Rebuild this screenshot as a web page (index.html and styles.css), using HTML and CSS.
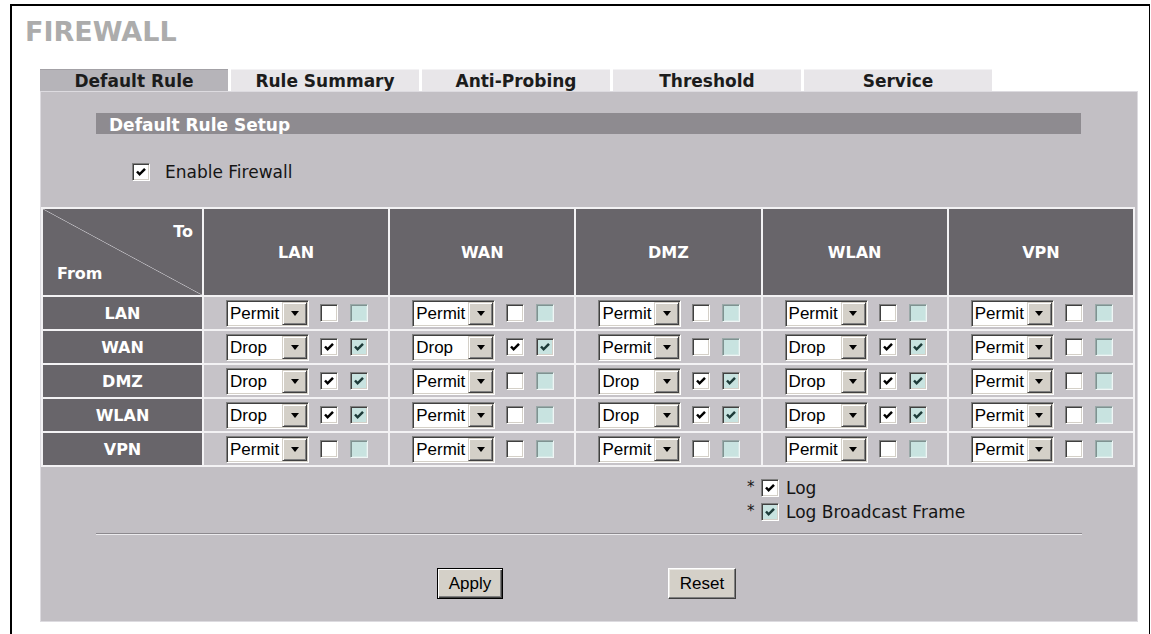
FILE: index.html
```html
<!DOCTYPE html>
<html lang="en">
<head>
<meta charset="utf-8">
<title>Firewall - Default Rule</title>
<link rel="stylesheet" href="styles.css">
</head>
<body>
<div class="frame">
  <h1 class="title">FIREWALL</h1>

  <div class="tabs">
    <div class="tab active">Default Rule</div>
    <div class="tab">Rule Summary</div>
    <div class="tab">Anti-Probing</div>
    <div class="tab">Threshold</div>
    <div class="tab">Service</div>
  </div>

  <div class="panel">
    <div class="section-bar">Default Rule Setup</div>

    <div class="enable">
      <span class="cb on"><svg viewBox="0 0 14 14"><path d="M3 6.5l2.6 2.8L11 3.8"/></svg></span>
      <span>Enable Firewall</span>
    </div>

    <table class="rules">
      <tr class="head">
        <th class="corner"><span class="to">To</span><span class="from">From</span></th>
        <th>LAN</th><th>WAN</th><th>DMZ</th><th>WLAN</th><th>VPN</th>
      </tr>
      <tr>
        <th>LAN</th>
        <td><div class="cell"><div class="select"><span class="value">Permit</span><span class="drop"><i></i></span></div><span class="cb"></span><span class="cb teal"></span></div></td>
        <td><div class="cell"><div class="select"><span class="value">Permit</span><span class="drop"><i></i></span></div><span class="cb"></span><span class="cb teal"></span></div></td>
        <td><div class="cell"><div class="select"><span class="value">Permit</span><span class="drop"><i></i></span></div><span class="cb"></span><span class="cb teal"></span></div></td>
        <td><div class="cell"><div class="select"><span class="value">Permit</span><span class="drop"><i></i></span></div><span class="cb"></span><span class="cb teal"></span></div></td>
        <td><div class="cell"><div class="select"><span class="value">Permit</span><span class="drop"><i></i></span></div><span class="cb"></span><span class="cb teal"></span></div></td>
      </tr>
      <tr>
        <th>WAN</th>
        <td><div class="cell"><div class="select"><span class="value">Drop</span><span class="drop"><i></i></span></div><span class="cb on"><svg viewBox="0 0 14 14"><path d="M3 6.5l2.6 2.8L11 3.8"/></svg></span><span class="cb teal on"><svg viewBox="0 0 14 14"><path d="M3 6.5l2.6 2.8L11 3.8"/></svg></span></div></td>
        <td><div class="cell"><div class="select"><span class="value">Drop</span><span class="drop"><i></i></span></div><span class="cb on"><svg viewBox="0 0 14 14"><path d="M3 6.5l2.6 2.8L11 3.8"/></svg></span><span class="cb teal on"><svg viewBox="0 0 14 14"><path d="M3 6.5l2.6 2.8L11 3.8"/></svg></span></div></td>
        <td><div class="cell"><div class="select"><span class="value">Permit</span><span class="drop"><i></i></span></div><span class="cb"></span><span class="cb teal"></span></div></td>
        <td><div class="cell"><div class="select"><span class="value">Drop</span><span class="drop"><i></i></span></div><span class="cb on"><svg viewBox="0 0 14 14"><path d="M3 6.5l2.6 2.8L11 3.8"/></svg></span><span class="cb teal on"><svg viewBox="0 0 14 14"><path d="M3 6.5l2.6 2.8L11 3.8"/></svg></span></div></td>
        <td><div class="cell"><div class="select"><span class="value">Permit</span><span class="drop"><i></i></span></div><span class="cb"></span><span class="cb teal"></span></div></td>
      </tr>
      <tr>
        <th>DMZ</th>
        <td><div class="cell"><div class="select"><span class="value">Drop</span><span class="drop"><i></i></span></div><span class="cb on"><svg viewBox="0 0 14 14"><path d="M3 6.5l2.6 2.8L11 3.8"/></svg></span><span class="cb teal on"><svg viewBox="0 0 14 14"><path d="M3 6.5l2.6 2.8L11 3.8"/></svg></span></div></td>
        <td><div class="cell"><div class="select"><span class="value">Permit</span><span class="drop"><i></i></span></div><span class="cb"></span><span class="cb teal"></span></div></td>
        <td><div class="cell"><div class="select"><span class="value">Drop</span><span class="drop"><i></i></span></div><span class="cb on"><svg viewBox="0 0 14 14"><path d="M3 6.5l2.6 2.8L11 3.8"/></svg></span><span class="cb teal on"><svg viewBox="0 0 14 14"><path d="M3 6.5l2.6 2.8L11 3.8"/></svg></span></div></td>
        <td><div class="cell"><div class="select"><span class="value">Drop</span><span class="drop"><i></i></span></div><span class="cb on"><svg viewBox="0 0 14 14"><path d="M3 6.5l2.6 2.8L11 3.8"/></svg></span><span class="cb teal on"><svg viewBox="0 0 14 14"><path d="M3 6.5l2.6 2.8L11 3.8"/></svg></span></div></td>
        <td><div class="cell"><div class="select"><span class="value">Permit</span><span class="drop"><i></i></span></div><span class="cb"></span><span class="cb teal"></span></div></td>
      </tr>
      <tr>
        <th>WLAN</th>
        <td><div class="cell"><div class="select"><span class="value">Drop</span><span class="drop"><i></i></span></div><span class="cb on"><svg viewBox="0 0 14 14"><path d="M3 6.5l2.6 2.8L11 3.8"/></svg></span><span class="cb teal on"><svg viewBox="0 0 14 14"><path d="M3 6.5l2.6 2.8L11 3.8"/></svg></span></div></td>
        <td><div class="cell"><div class="select"><span class="value">Permit</span><span class="drop"><i></i></span></div><span class="cb"></span><span class="cb teal"></span></div></td>
        <td><div class="cell"><div class="select"><span class="value">Drop</span><span class="drop"><i></i></span></div><span class="cb on"><svg viewBox="0 0 14 14"><path d="M3 6.5l2.6 2.8L11 3.8"/></svg></span><span class="cb teal on"><svg viewBox="0 0 14 14"><path d="M3 6.5l2.6 2.8L11 3.8"/></svg></span></div></td>
        <td><div class="cell"><div class="select"><span class="value">Drop</span><span class="drop"><i></i></span></div><span class="cb on"><svg viewBox="0 0 14 14"><path d="M3 6.5l2.6 2.8L11 3.8"/></svg></span><span class="cb teal on"><svg viewBox="0 0 14 14"><path d="M3 6.5l2.6 2.8L11 3.8"/></svg></span></div></td>
        <td><div class="cell"><div class="select"><span class="value">Permit</span><span class="drop"><i></i></span></div><span class="cb"></span><span class="cb teal"></span></div></td>
      </tr>
      <tr>
        <th>VPN</th>
        <td><div class="cell"><div class="select"><span class="value">Permit</span><span class="drop"><i></i></span></div><span class="cb"></span><span class="cb teal"></span></div></td>
        <td><div class="cell"><div class="select"><span class="value">Permit</span><span class="drop"><i></i></span></div><span class="cb"></span><span class="cb teal"></span></div></td>
        <td><div class="cell"><div class="select"><span class="value">Permit</span><span class="drop"><i></i></span></div><span class="cb"></span><span class="cb teal"></span></div></td>
        <td><div class="cell"><div class="select"><span class="value">Permit</span><span class="drop"><i></i></span></div><span class="cb"></span><span class="cb teal"></span></div></td>
        <td><div class="cell"><div class="select"><span class="value">Permit</span><span class="drop"><i></i></span></div><span class="cb"></span><span class="cb teal"></span></div></td>
      </tr>
    </table>

    <div class="logs">
      <div class="log-line">
        <span class="star">*</span>
        <span class="cb on"><svg viewBox="0 0 14 14"><path d="M3 6.5l2.6 2.8L11 3.8"/></svg></span>
        <span>Log</span>
      </div>
      <div class="log-line">
        <span class="star">*</span>
        <span class="cb teal on"><svg viewBox="0 0 14 14"><path d="M3 6.5l2.6 2.8L11 3.8"/></svg></span>
        <span>Log Broadcast Frame</span>
      </div>
    </div>

    <div class="rule-line"></div>

    <div class="actions">
      <button class="btn default" type="button">Apply</button>
      <button class="btn reset" type="button">Reset</button>
    </div>
  </div>
</div>
</body>
</html>
```

FILE: styles.css
```css
* { box-sizing: border-box; }

html, body {
  margin: 0;
  height: 100%;
  overflow: hidden;
  background: #fff;
}

body {
  font-family: "DejaVu Sans", Verdana, sans-serif;
  color: #111;
}

/* outer page frame */
.frame {
  margin: 4px 0 0 10px;
  width: 1140px;
  height: 640px;
  border-top: 2px solid #000;
  border-left: 2px solid #000;
  border-right: 1px solid #000;
}

.title {
  margin: 10px 0 0 13px;
  font-size: 27px;
  line-height: 32px;
  font-weight: bold;
  color: #acacac;
}

/* tab strip */
.tabs {
  display: flex;
  gap: 3px;
  margin: 21px 0 0 28px;
}

.tab {
  width: 188px;
  height: 22px;
  background: #e8e6e9;
  border-top: 1px solid #f3f2f4;
  font-size: 17px;
  font-weight: bold;
  line-height: 22px;
  text-align: center;
  color: #1c1c1c;
}

.tab.active {
  background: #b6b4b9;
  border-top-color: #a3a1a6;
}

/* gray content panel */
.panel {
  margin-left: 28px;
  width: 1098px;
  background: #c2bfc4;
  border: 1px solid #dddbe0;
  padding-bottom: 22px;
}

.section-bar {
  margin: 21px 56px 0 55px;
  height: 21px;
  padding-left: 13px;
  background: #8e8b90;
  color: #fff;
  font-size: 17px;
  font-weight: bold;
  line-height: 25px;
  overflow: hidden;
}

.enable {
  display: flex;
  align-items: center;
  gap: 15px;
  height: 20px;
  margin: 28px 0 25px 91px;
  font-size: 17px;
  color: #151515;
}

/* checkboxes with classic sunken border */
.cb {
  display: inline-block;
  flex: none;
  width: 18px;
  height: 18px;
  background: #fff;
  border: 1px solid;
  border-color: #808080 #fff #fff #808080;
  box-shadow: inset 1px 1px 0 #404040, inset -1px -1px 0 #d4d0c8;
}

.cb.teal {
  background: #c8e3e0;
  border-color: #9aa9a8 #eef6f5 #eef6f5 #9aa9a8;
  box-shadow: inset 1px 1px 0 #7f9291, inset -1px -1px 0 #d5e8e6;
}

.cb.teal.on {
  border-color: #808080 #fff #fff #808080;
  box-shadow: inset 1px 1px 0 #404040, inset -1px -1px 0 #d4d0c8;
}

.cb svg {
  display: block;
  width: 14px;
  height: 14px;
  margin: 1px;
}

.cb svg path {
  fill: none;
  stroke: #000;
  stroke-width: 2.5;
}

.cb.teal svg path {
  stroke: #1d3b39;
}

/* rule matrix */
.rules {
  width: 1094px;
  border-spacing: 2px;
  background: #f3f2f4;
  table-layout: fixed;
}

.rules th,
.rules td {
  padding: 0;
}

.rules th {
  background: #68656a;
  color: #fff;
  font-size: 16px;
  font-weight: bold;
  text-align: center;
}

.rules .head th {
  height: 86px;
}

.rules th.corner {
  width: 159px;
  padding: 13px 9px 9px 14px;
  vertical-align: top;
  text-align: left;
  background: linear-gradient(to top right, #68656a calc(50% - 0.7px), #bdbbc0 50%, #68656a calc(50% + 0.7px));
}

.corner .to {
  display: block;
  text-align: right;
  line-height: 20px;
}

.corner .from {
  display: block;
  margin-top: 22px;
  line-height: 20px;
}

.rules td {
  height: 32px;
  background: #c6c3c8;
}

.cell {
  display: flex;
  align-items: center;
  padding-left: 22px;
}

.cell .cb {
  margin-left: 11px;
}

.cell .cb + .cb {
  margin-left: 12px;
}

/* drop-down list */
.select {
  display: flex;
  width: 83px;
  height: 27px;
  border: 1px solid;
  border-color: #808080 #fff #fff #808080;
  box-shadow: inset 1px 1px 0 #404040, inset -1px -1px 0 #d4d0c8;
  padding: 1px;
}

.select .value {
  flex: 1;
  min-width: 0;
  background: #fff;
  padding-left: 2px;
  font-family: "Liberation Sans", Arial, sans-serif;
  font-size: 17px;
  line-height: 23px;
  color: #000;
}

.select .drop {
  display: flex;
  flex: none;
  align-items: center;
  justify-content: center;
  width: 25px;
  background: #d4d0c8;
  border: 1px solid;
  border-color: #d4d0c8 #404040 #404040 #d4d0c8;
  box-shadow: inset 1px 1px 0 #fff, inset -1px -1px 0 #808080;
}

.select .drop i {
  width: 0;
  height: 0;
  border-left: 4px solid transparent;
  border-right: 4px solid transparent;
  border-top: 5px solid #000;
}

/* log options */
.logs {
  margin: 9px 0 0 706px;
  font-size: 17px;
  color: #151515;
}

.log-line {
  display: flex;
  align-items: center;
  height: 24px;
}

.star {
  width: 9px;
  margin-right: 5px;
  font-size: 15px;
  align-self: flex-start;
  margin-top: 2px;
}

.log-line .cb {
  margin-right: 7px;
}

.rule-line {
  margin: 9px 55px 0 55px;
  height: 2px;
  border-top: 1px solid #8c898e;
  border-bottom: 1px solid #ecebee;
}

/* buttons */
.actions {
  display: flex;
  margin-top: 33px;
  padding-left: 396px;
}

.btn {
  height: 31px;
  padding: 0;
  background: #d4d0c8;
  border: 1px solid;
  border-color: #fff #404040 #404040 #fff;
  box-shadow: inset -1px -1px 0 #808080, inset 1px 1px 0 #eae8e4;
  font-family: "Liberation Sans", Arial, sans-serif;
  font-size: 17px;
  color: #000;
}

.btn.default {
  width: 66px;
  border-color: #000;
  box-shadow: inset 1px 1px 0 #fff, inset -1px -1px 0 #404040, inset -2px -2px 0 #808080;
}

.btn.reset {
  width: 68px;
  margin-left: 165px;
}
```
